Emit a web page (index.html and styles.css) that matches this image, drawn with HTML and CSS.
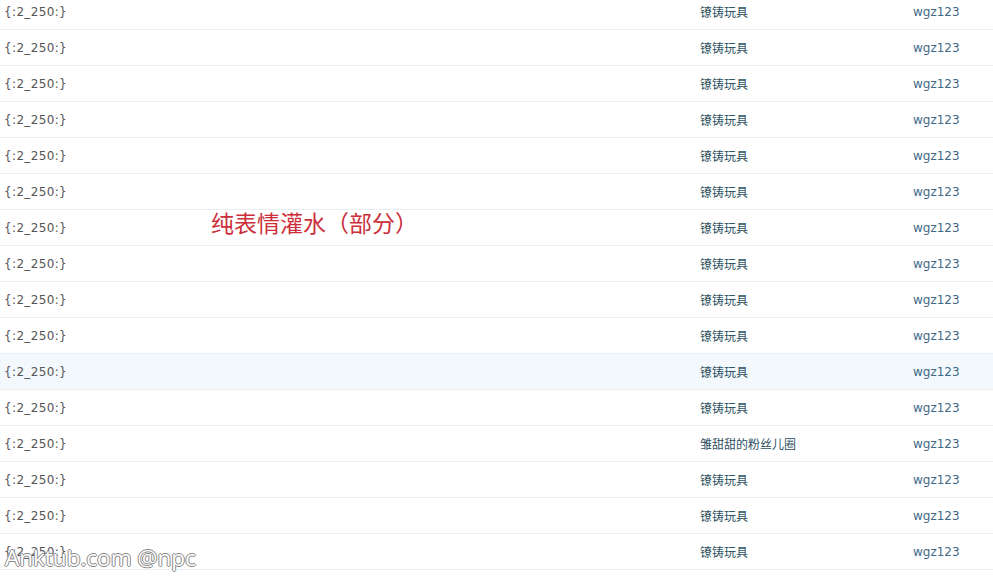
FILE: index.html
```html
<!DOCTYPE html>
<html lang="zh-CN">
<head>
<meta charset="utf-8">
<title>list</title>
<link rel="stylesheet" href="styles.css">
</head>
<body>
<div class="page">
  <div class="list">
    <div class="row"><span class="c1">{:2_250:}</span><a class="c2">镣铸玩具</a><a class="c3">wgz123</a></div>
    <div class="row"><span class="c1">{:2_250:}</span><a class="c2">镣铸玩具</a><a class="c3">wgz123</a></div>
    <div class="row"><span class="c1">{:2_250:}</span><a class="c2">镣铸玩具</a><a class="c3">wgz123</a></div>
    <div class="row"><span class="c1">{:2_250:}</span><a class="c2">镣铸玩具</a><a class="c3">wgz123</a></div>
    <div class="row"><span class="c1">{:2_250:}</span><a class="c2">镣铸玩具</a><a class="c3">wgz123</a></div>
    <div class="row"><span class="c1">{:2_250:}</span><a class="c2">镣铸玩具</a><a class="c3">wgz123</a></div>
    <div class="row"><span class="c1">{:2_250:}</span><a class="c2">镣铸玩具</a><a class="c3">wgz123</a></div>
    <div class="row"><span class="c1">{:2_250:}</span><a class="c2">镣铸玩具</a><a class="c3">wgz123</a></div>
    <div class="row"><span class="c1">{:2_250:}</span><a class="c2">镣铸玩具</a><a class="c3">wgz123</a></div>
    <div class="row"><span class="c1">{:2_250:}</span><a class="c2">镣铸玩具</a><a class="c3">wgz123</a></div>
    <div class="row hover"><span class="c1">{:2_250:}</span><a class="c2">镣铸玩具</a><a class="c3">wgz123</a></div>
    <div class="row"><span class="c1">{:2_250:}</span><a class="c2">镣铸玩具</a><a class="c3">wgz123</a></div>
    <div class="row"><span class="c1">{:2_250:}</span><a class="c2">雏甜甜的粉丝儿圈</a><a class="c3">wgz123</a></div>
    <div class="row"><span class="c1">{:2_250:}</span><a class="c2">镣铸玩具</a><a class="c3">wgz123</a></div>
    <div class="row"><span class="c1">{:2_250:}</span><a class="c2">镣铸玩具</a><a class="c3">wgz123</a></div>
    <div class="row"><span class="c1">{:2_250:}</span><a class="c2">镣铸玩具</a><a class="c3">wgz123</a></div>
  </div>
  <div class="note">纯表情灌水（部分）</div>
  <div class="mark">Anktub.com @npc</div>
</div>
</body>
</html>
```
FILE: styles.css
```css
html, body {
  margin: 0;
  padding: 0;
  background: #fff;
  overflow: hidden;
}
.page {
  position: relative;
  width: 993px;
  height: 577px;
  overflow: hidden;
  font-family: "DejaVu Sans", Verdana, "Noto Sans CJK SC", sans-serif;
  font-size: 12px;
}
.list {
  margin-top: -6px;
}
.row {
  display: grid;
  grid-template-columns: 696px 213px 1fr;
  height: 35px;
  align-items: center;
  border-bottom: 1px solid #e8eef1;
}
.row.hover {
  background: #f2f8fc;
}
.c1, .c2, .c3 {
  padding-left: 4px;
  white-space: nowrap;
}
.c1 {
  color: #555;
  letter-spacing: 0.35px;
}
.c2 {
  color: #2f5162;
  font-family: "Noto Sans CJK SC", sans-serif;
}
.c3 {
  color: #3f6986;
}
.note {
  position: absolute;
  left: 211px;
  top: 207px;
  font-family: "Noto Sans CJK SC", sans-serif;
  font-size: 23px;
  color: #cc2f3b;
  line-height: 30px;
}
.mark {
  position: absolute;
  left: 5px;
  top: 543px;
  font-family: "Open Sans", "DejaVu Sans", sans-serif;
  font-size: 22.5px;
  line-height: 30px;
  color: #fff;
  text-shadow: 1px 0 0 #888, -1px 0 0 #888, 0 1px 0 #888, 0 -1px 0 #888;
}
```
